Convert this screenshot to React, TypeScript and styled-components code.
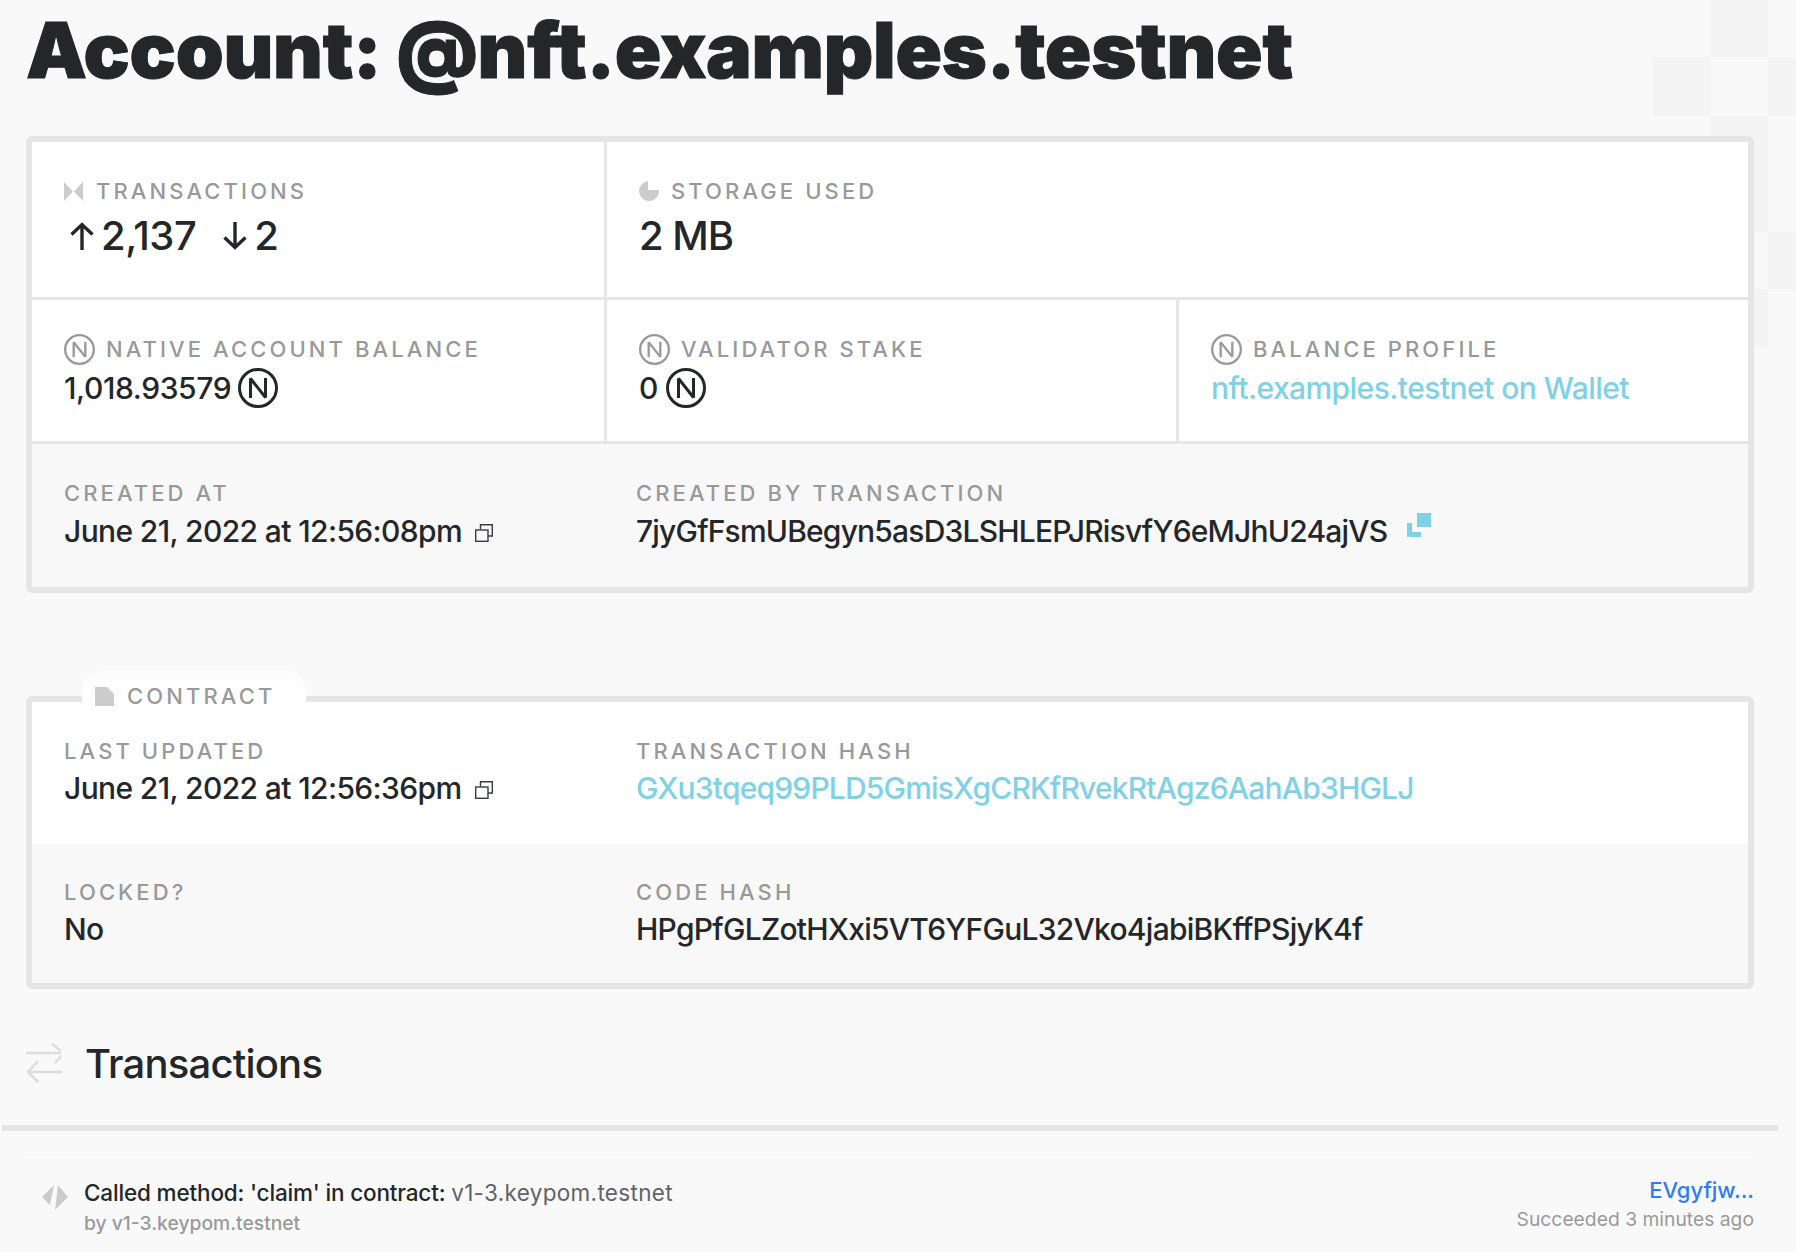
import { ReactElement } from "react";
import styled, { createGlobalStyle } from "styled-components";

const GlobalStyle = createGlobalStyle`
  html, body {
    background-color: #f9f9f9;
    color: #24272a;
    font-family: Inter, "Noto Sans", "Liberation Sans", sans-serif;
    height: 100%;
    margin: 0;
    overflow: hidden;
  }
`;

const Backdrop = styled.svg`
  height: 347px;
  pointer-events: none;
  position: absolute;
  right: 0;
  top: 0;
  width: 143px;
`;

const Page = styled.div`
  padding: 0 42px 0 26px;
  position: relative;
`;

const Title = styled.h1`
  font-size: 76.8px;
  font-weight: 900;
  -webkit-text-stroke: 1px #24272a;
  letter-spacing: -0.25px;
  line-height: 92px;
  margin: 0;
  padding: 5px 0 39px;
  white-space: nowrap;
`;

const Card = styled.div<{ $spaced?: boolean }>`
  background-color: #fff;
  border: 6px solid #e5e5e5;
  border-radius: 6px;
  margin-top: ${props => (props.$spaced ? "103px" : "0")};
  position: relative;
`;

const Row = styled.div<{ $height: number; $muted?: boolean; $line?: boolean }>`
  background-color: ${props => (props.$muted ? "#f8f8f8" : "#fff")};
  border-bottom: ${props => (props.$line ? "3px solid #e6e6e6" : "0")};
  box-sizing: border-box;
  display: flex;
  height: ${props => props.$height}px;
`;

const Cell = styled.div<{ $width?: number; $divider?: boolean }>`
  border-right: ${props => (props.$divider ? "3px solid #e6e6e6" : "0")};
  box-sizing: border-box;
  flex: ${props => (props.$width ? `0 0 ${props.$width}px` : "1")};
  min-width: 0;
  padding: 35px 32px 0;
`;

const Label = styled.div<{ $gap?: number }>`
  align-items: center;
  color: #999;
  display: flex;
  font-size: 22px;
  font-weight: 500;
  gap: ${props => props.$gap ?? 13}px;
  height: 28px;
  letter-spacing: 3.1px;
  text-transform: uppercase;
`;

const Value = styled.div<{ $gap?: number; $tracking?: number; $top?: number }>`
  align-items: center;
  display: flex;
  font-size: 30px;
  font-weight: 450;
  gap: ${props => props.$gap ?? 0}px;
  height: 36px;
  letter-spacing: ${props => props.$tracking ?? -0.62}px;
  line-height: 36px;
  margin-top: ${props => props.$top ?? 5}px;
  white-space: nowrap;
`;

const BigValue = styled.div<{ $tracking?: number }>`
  align-items: center;
  display: flex;
  font-size: 40px;
  font-weight: 450;
  height: 44px;
  letter-spacing: ${props => props.$tracking ?? -0.5}px;
  line-height: 44px;
  margin-top: 9px;
`;

const Count = styled.span<{ $last?: boolean }>`
  margin-left: 7px;
  margin-right: ${props => (props.$last ? "0" : "27px")};
`;

const ArrowIcon = styled.svg<{ $offset?: number }>`
  height: 28px;
  margin-left: ${props => props.$offset ?? 0}px;
  width: 24px;
`;

const CyanLink = styled.a`
  color: #7fd1e6;
  font-weight: 500;
`;

const Contract = styled.div`
  align-items: center;
  background: linear-gradient(#fcfcfc, #fff);
  border-radius: 22px 22px 0 0;
  box-sizing: border-box;
  color: #999;
  display: flex;
  font-size: 22px;
  font-weight: 500;
  gap: 13px;
  height: 32px;
  left: 50px;
  letter-spacing: 3.1px;
  padding: 20px 0 0 13px;
  position: absolute;
  top: -32px;
  width: 224px;
`;

const SectionHeader = styled.div`
  align-items: center;
  border-bottom: 6px solid #e6e6e6;
  box-sizing: border-box;
  display: flex;
  gap: 23px;
  height: 142px;
  margin: 0 -24px;
  padding: 14px 0 0 24px;
`;

const SwapIcon = styled.svg`
  height: 40px;
  margin-bottom: 3px;
  width: 36px;
`;

const SectionTitle = styled.h2`
  font-size: 40px;
  font-weight: 500;
  letter-spacing: -0.8px;
  line-height: 48px;
  margin: 0;
`;

const TxRow = styled.div`
  align-items: flex-start;
  border-top: 1px solid #fbfbfb;
  display: flex;
  justify-content: space-between;
  margin-top: 26px;
  padding: 19px 0 0 16px;
`;

const TxLeft = styled.div`
  display: flex;
  gap: 16px;
`;

const TxIcon = styled.svg`
  height: 26px;
  margin-top: 7px;
  width: 26px;
`;

const TxText = styled.div`
  font-size: 22.5px;
  font-weight: 500;
  letter-spacing: -0.16px;
  line-height: 32px;
`;

const TxMuted = styled.span`
  color: #5f6368;
  font-weight: 400;
  letter-spacing: 0.32px;
`;

const TxSub = styled.div`
  color: #999;
  font-size: 19.3px;
  font-weight: 500;
  line-height: 29px;
`;

const TxRight = styled.div`
  margin-top: -2px;
  text-align: right;
`;

const TxHash = styled.a`
  color: #2f7bf6;
  display: block;
  font-size: 22px;
  font-weight: 500;
  line-height: 30px;
`;

const TxStatus = styled.div`
  color: #999;
  font-size: 19.3px;
  line-height: 28px;
`;

function NearIcon({ size, color, stroke }: { size: number; color: string; stroke: number }): ReactElement {
  return (
    <svg width={size} height={size} viewBox="0 0 40 40" fill="none" style={{ flexShrink: 0 }}>
      <circle cx="20" cy="20" r={20 - stroke / 2} stroke={color} strokeWidth={stroke} />
      <path d="M12.5 30V10.5L27.5 29.5V10" stroke={color} strokeWidth={stroke} strokeLinejoin="bevel" />
    </svg>
  );
}

function CopyIcon(): ReactElement {
  return (
    <svg width="18" height="18" viewBox="0 0 18 18" fill="none" style={{ marginLeft: 13, marginTop: 3 }}>
      <path d="M5.5 5.5V0.7H17.3V12H13" stroke="#3a3c3f" strokeWidth="1.4" />
      <rect x="0.7" y="6" width="12.3" height="11.3" stroke="#3a3c3f" strokeWidth="1.4" />
    </svg>
  );
}

function LinkIcon(): ReactElement {
  return (
    <svg width="24" height="24" viewBox="0 0 24 24" style={{ marginLeft: 20, marginTop: -13 }}>
      <rect x="10" y="0" width="14" height="14" fill="#7fd1e6" />
      <path d="M0 10H5V19H14V24H0Z" fill="#7fd1e6" />
    </svg>
  );
}

function App(): ReactElement {
  return (
    <Page>
      <GlobalStyle />
      <Backdrop viewBox="0 0 143 347">
        <g fill="#f4f4f4">
          <rect x="58" y="0" width="57" height="57" />
          <rect x="0" y="57" width="58" height="59" />
          <rect x="115" y="57" width="28" height="59" />
          <rect x="58" y="116" width="57" height="58" />
          <rect x="58" y="174" width="57" height="58" />
          <rect x="115" y="232" width="28" height="57" />
          <rect x="58" y="289" width="57" height="58" />
        </g>
      </Backdrop>

      <Title>Account: @nft.examples.testnet</Title>

      <Card>
        <Row $height={158} $line>
          <Cell $width={575} $divider>
            <Label>
              <svg width="19" height="19" viewBox="0 0 19 19" fill="#ccc">
                <path d="M0 0L9 9.5L0 19Z" />
                <path d="M19 0L10 9.5L19 19Z" />
              </svg>
              Transactions
            </Label>
            <BigValue>
              <ArrowIcon viewBox="0 0 24 28" fill="none" stroke="#24272a" strokeWidth="3.4" $offset={6}>
                <path d="M12 28V2.5M1.5 12.5L12 2.5L22.5 12.5" />
              </ArrowIcon>
              <Count>2,137</Count>
              <ArrowIcon viewBox="0 0 24 28" fill="none" stroke="#24272a" strokeWidth="3.4">
                <path d="M12 0V25.5M1.5 15.5L12 25.5L22.5 15.5" />
              </ArrowIcon>
              <Count $last>2</Count>
            </BigValue>
          </Cell>
          <Cell>
            <Label $gap={12}>
              <svg width="20" height="20" viewBox="0 0 20 20" fill="#ccc">
                <path d="M9 0.05V9H20A10 10 0 1 1 9 0.05Z" />
              </svg>
              Storage used
            </Label>
            <BigValue $tracking={-1}>2 MB</BigValue>
          </Cell>
        </Row>

        <Row $height={144} $line>
          <Cell $width={575} $divider>
            <Label $gap={11}>
              <NearIcon size={31} color="#999" stroke={3} />
              Native account balance
            </Label>
            <Value $gap={7} $tracking={-0.4} $top={7}>
              1,018.93579
              <NearIcon size={40} color="#24272a" stroke={3} />
            </Value>
          </Cell>
          <Cell $width={572} $divider>
            <Label $gap={11}>
              <NearIcon size={31} color="#999" stroke={3} />
              Validator stake
            </Label>
            <Value $gap={8} $top={7}>
              0
              <NearIcon size={40} color="#24272a" stroke={3} />
            </Value>
          </Cell>
          <Cell>
            <Label $gap={11}>
              <NearIcon size={31} color="#999" stroke={3} />
              Balance profile
            </Label>
            <Value $tracking={-0.55} $top={7}>
              <CyanLink>nft.examples.testnet on Wallet</CyanLink>
            </Value>
          </Cell>
        </Row>

        <Row $height={143} $muted>
          <Cell $width={572}>
            <Label>Created at</Label>
            <Value $top={6}>
              June 21, 2022 at 12:56:08pm
              <CopyIcon />
            </Value>
          </Cell>
          <Cell>
            <Label>Created by transaction</Label>
            <Value $tracking={-0.81} $top={6}>
              7jyGfFsmUBegyn5asD3LSHLEPJRisvfY6eMJhU24ajVS
              <LinkIcon />
            </Value>
          </Cell>
        </Row>
      </Card>

      <Card $spaced>
        <Contract>
          <svg width="19" height="19" viewBox="0 0 19 19" fill="#ccc">
            <path d="M0 0H12L19 7V19H0Z" />
          </svg>
          CONTRACT
        </Contract>
        <Row $height={141}>
          <Cell $width={572}>
            <Label>Last updated</Label>
            <Value>
              June 21, 2022 at 12:56:36pm
              <CopyIcon />
            </Value>
          </Cell>
          <Cell>
            <Label>Transaction hash</Label>
            <Value $tracking={-0.81}>
              <CyanLink>GXu3tqeq99PLD5GmisXgCRKfRvekRtAgz6AahAb3HGLJ</CyanLink>
            </Value>
          </Cell>
        </Row>
        <Row $height={140} $muted>
          <Cell $width={572}>
            <Label>Locked?</Label>
            <Value>No</Value>
          </Cell>
          <Cell>
            <Label>Code hash</Label>
            <Value $tracking={-0.73}>HPgPfGLZotHXxi5VT6YFGuL32Vko4jabiBKffPSjyK4f</Value>
          </Cell>
        </Row>
      </Card>

      <SectionHeader>
        <SwapIcon viewBox="0 0 36 40" fill="none" stroke="#ddd" strokeWidth="2.6">
          <path d="M0 10H35" />
          <path d="M26 1L35 8" />
          <path d="M35 13L29 20" />
          <path d="M36 29H3" />
          <path d="M12 18L2 29L12 39" />
        </SwapIcon>
        <SectionTitle>Transactions</SectionTitle>
      </SectionHeader>

      <TxRow>
        <TxLeft>
          <TxIcon viewBox="0 0 26 26" fill="#ccc">
            <path d="M0 13L12 1L8 21Z" />
            <path d="M16 1L26 13L13 26Z" />
          </TxIcon>
          <div>
            <TxText>
              Called method: 'claim' in contract: <TxMuted>v1-3.keypom.testnet</TxMuted>
            </TxText>
            <TxSub>by v1-3.keypom.testnet</TxSub>
          </div>
        </TxLeft>
        <TxRight>
          <TxHash>EVgyfjw...</TxHash>
          <TxStatus>Succeeded 3 minutes ago</TxStatus>
        </TxRight>
      </TxRow>
    </Page>
  );
}

export default App;
